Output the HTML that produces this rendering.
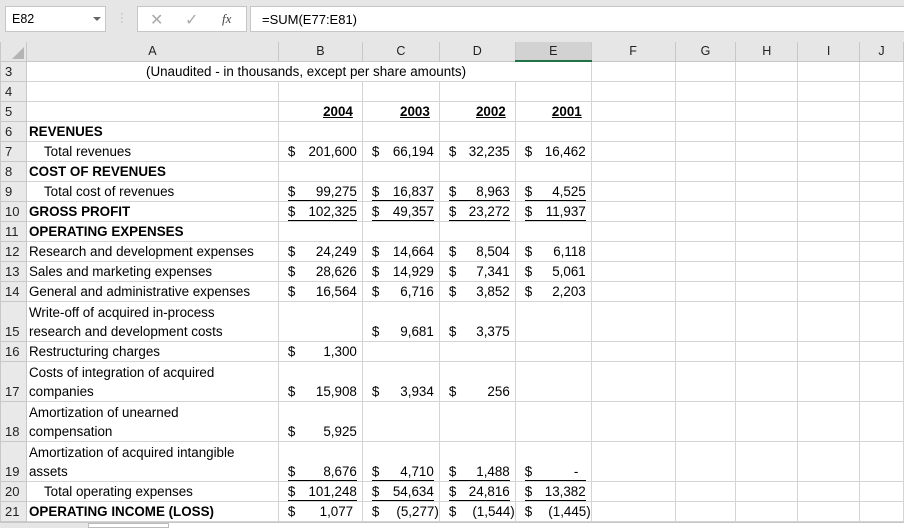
<!DOCTYPE html>
<html><head><meta charset="utf-8"><style>
*{margin:0;padding:0;box-sizing:border-box}
body{width:904px;height:528px;overflow:hidden;background:#e6e6e6;font-family:"Liberation Sans",sans-serif;font-size:13.4px;color:#000;position:relative}
.box{position:absolute;background:#fff;border:1px solid #c6c6c6;font-size:12.5px}
table{position:absolute;left:0;top:42px;border-collapse:collapse;table-layout:fixed;background:#fff}
td{border:1px solid #d4d4d4;height:20px;padding:0 2px;white-space:nowrap;overflow:visible;vertical-align:bottom;line-height:18px}
td.rh{background:#e9e9e9;border-color:#c8c8c8;text-align:left;padding-left:4px;color:#222;font-size:13px}
tr.ch td{background:#e6e6e6;border-color:#c8c8c8;text-align:center;vertical-align:middle;height:19px;line-height:17px;border-top:none;color:#222;font-size:12.5px}
tr.t td{height:40px}
.b{font-weight:bold}
.w{line-height:19px}
.n{padding:0 5px 0 9px}
.n div{display:flex;justify-content:space-between}
.u div{border-bottom:1px solid #000;line-height:16px}
.yr{text-align:right;padding-right:9px;font-weight:bold;text-decoration:underline}
</style></head><body>
<div class="box" style="left:5px;top:6px;width:101px;height:26px;padding:5px 0 0 6px">E82<span style="position:absolute;left:87px;top:10px;border:4px solid transparent;border-top:4px solid #666"></span></div>
<div style="position:absolute;left:120px;top:12px;color:#aaa;font-size:11px;line-height:4px">·<br>·<br>·</div>
<div class="box" style="left:137px;top:6px;width:110px;height:26px;color:#aaa"><span style="position:absolute;left:12px;top:3px;font-size:16px">✕</span><span style="position:absolute;left:47px;top:3px;font-size:16px">✓</span><span style="position:absolute;left:84px;top:4px;font-family:'Liberation Serif',serif;font-style:italic;color:#444;font-size:13px">fx</span></div>
<div class="box" style="left:250px;top:6px;width:660px;height:26px;padding:5px 0 0 11px;font-size:13px">=SUM(E77:E81)</div>
<table>
<colgroup><col style="width:26px"><col style="width:252px"><col style="width:84px"><col style="width:77px"><col style="width:76px"><col style="width:76px"><col style="width:84px"><col style="width:61px"><col style="width:62px"><col style="width:62px"><col style="width:44px"></colgroup>
<tr class="ch"><td style="position:relative"><span style="position:absolute;right:2px;bottom:2px;border:6px solid transparent;border-right-color:#b4b4b4;border-bottom-color:#b4b4b4"></span></td><td>A</td><td>B</td><td>C</td><td>D</td><td style="background:#d2d2d2;border-bottom:2px solid #217346">E</td><td>F</td><td>G</td><td>H</td><td>I</td><td>J</td></tr>
<tr><td class="rh">3</td><td colspan="5" style="padding-left:119px">(Unaudited - in thousands, except per share amounts)</td><td></td><td></td><td></td><td></td><td></td></tr>
<tr><td class="rh">4</td><td></td><td></td><td></td><td></td><td></td><td></td><td></td><td></td><td></td><td></td></tr>
<tr><td class="rh">5</td><td></td><td class="yr">2004</td><td class="yr">2003</td><td class="yr">2002</td><td class="yr">2001</td><td></td><td></td><td></td><td></td><td></td></tr>
<tr><td class="rh">6</td><td class="b">REVENUES</td><td></td><td></td><td></td><td></td><td></td><td></td><td></td><td></td><td></td></tr>
<tr><td class="rh">7</td><td style="padding-left:17px">Total revenues</td><td class="n"><div><span>$</span><span>201,600</span></div></td><td class="n"><div><span>$</span><span>66,194</span></div></td><td class="n"><div><span>$</span><span>32,235</span></div></td><td class="n"><div><span>$</span><span>16,462</span></div></td><td></td><td></td><td></td><td></td><td></td></tr>
<tr><td class="rh">8</td><td class="b">COST OF REVENUES</td><td></td><td></td><td></td><td></td><td></td><td></td><td></td><td></td><td></td></tr>
<tr><td class="rh">9</td><td style="padding-left:17px">Total cost of revenues</td><td class="n u"><div><span>$</span><span>99,275</span></div></td><td class="n u"><div><span>$</span><span>16,837</span></div></td><td class="n u"><div><span>$</span><span>8,963</span></div></td><td class="n u"><div><span>$</span><span>4,525</span></div></td><td></td><td></td><td></td><td></td><td></td></tr>
<tr><td class="rh">10</td><td class="b">GROSS PROFIT</td><td class="n u"><div><span>$</span><span>102,325</span></div></td><td class="n u"><div><span>$</span><span>49,357</span></div></td><td class="n u"><div><span>$</span><span>23,272</span></div></td><td class="n u"><div><span>$</span><span>11,937</span></div></td><td></td><td></td><td></td><td></td><td></td></tr>
<tr><td class="rh">11</td><td class="b">OPERATING EXPENSES</td><td></td><td></td><td></td><td></td><td></td><td></td><td></td><td></td><td></td></tr>
<tr><td class="rh">12</td><td>Research and development expenses</td><td class="n"><div><span>$</span><span>24,249</span></div></td><td class="n"><div><span>$</span><span>14,664</span></div></td><td class="n"><div><span>$</span><span>8,504</span></div></td><td class="n"><div><span>$</span><span>6,118</span></div></td><td></td><td></td><td></td><td></td><td></td></tr>
<tr><td class="rh">13</td><td>Sales and marketing expenses</td><td class="n"><div><span>$</span><span>28,626</span></div></td><td class="n"><div><span>$</span><span>14,929</span></div></td><td class="n"><div><span>$</span><span>7,341</span></div></td><td class="n"><div><span>$</span><span>5,061</span></div></td><td></td><td></td><td></td><td></td><td></td></tr>
<tr><td class="rh">14</td><td>General and administrative expenses</td><td class="n"><div><span>$</span><span>16,564</span></div></td><td class="n"><div><span>$</span><span>6,716</span></div></td><td class="n"><div><span>$</span><span>3,852</span></div></td><td class="n"><div><span>$</span><span>2,203</span></div></td><td></td><td></td><td></td><td></td><td></td></tr>
<tr class="t"><td class="rh">15</td><td class="w">Write-off of acquired in-process<br>research and development costs</td><td></td><td class="n"><div><span>$</span><span>9,681</span></div></td><td class="n"><div><span>$</span><span>3,375</span></div></td><td></td><td></td><td></td><td></td><td></td><td></td></tr>
<tr><td class="rh">16</td><td>Restructuring charges</td><td class="n"><div><span>$</span><span>1,300</span></div></td><td></td><td></td><td></td><td></td><td></td><td></td><td></td><td></td></tr>
<tr class="t"><td class="rh">17</td><td class="w">Costs of integration of acquired<br>companies</td><td class="n"><div><span>$</span><span>15,908</span></div></td><td class="n"><div><span>$</span><span>3,934</span></div></td><td class="n"><div><span>$</span><span>256</span></div></td><td></td><td></td><td></td><td></td><td></td><td></td></tr>
<tr class="t"><td class="rh">18</td><td class="w">Amortization of unearned<br>compensation</td><td class="n"><div><span>$</span><span>5,925</span></div></td><td></td><td></td><td></td><td></td><td></td><td></td><td></td><td></td></tr>
<tr class="t"><td class="rh">19</td><td class="w">Amortization of acquired intangible<br>assets</td><td class="n u"><div><span>$</span><span>8,676</span></div></td><td class="n u"><div><span>$</span><span>4,710</span></div></td><td class="n u"><div><span>$</span><span>1,488</span></div></td><td class="n u"><div><span>$</span><span>-&nbsp;&nbsp;</span></div></td><td></td><td></td><td></td><td></td><td></td></tr>
<tr><td class="rh">20</td><td style="padding-left:17px">Total operating expenses</td><td class="n u"><div><span>$</span><span>101,248</span></div></td><td class="n u"><div><span>$</span><span>54,634</span></div></td><td class="n u"><div><span>$</span><span>24,816</span></div></td><td class="n u"><div><span>$</span><span>13,382</span></div></td><td></td><td></td><td></td><td></td><td></td></tr>
<tr><td class="rh">21</td><td class="b">OPERATING INCOME (LOSS)</td><td class="n"><div><span>$</span><span>1,077&nbsp;</span></div></td><td class="n" style="padding-right:0"><div><span>$</span><span>(5,277)</span></div></td><td class="n" style="padding-right:0"><div><span>$</span><span>(1,544)</span></div></td><td class="n" style="padding-right:0"><div><span>$</span><span>(1,445)</span></div></td><td></td><td></td><td></td><td></td><td></td></tr>
</table>
<div style="position:absolute;left:0;top:522px;width:904px;height:6px;background:#e6e6e6;border-top:1px solid #c6c6c6"></div>
<div style="position:absolute;left:88px;top:523px;width:176px;height:5px;background:#fff;border:1px solid #bbb"></div>
<div style="position:absolute;left:168px;top:523px;width:736px;height:5px;background:#fff;border-left:1px solid #bbb"></div>
</body></html>
